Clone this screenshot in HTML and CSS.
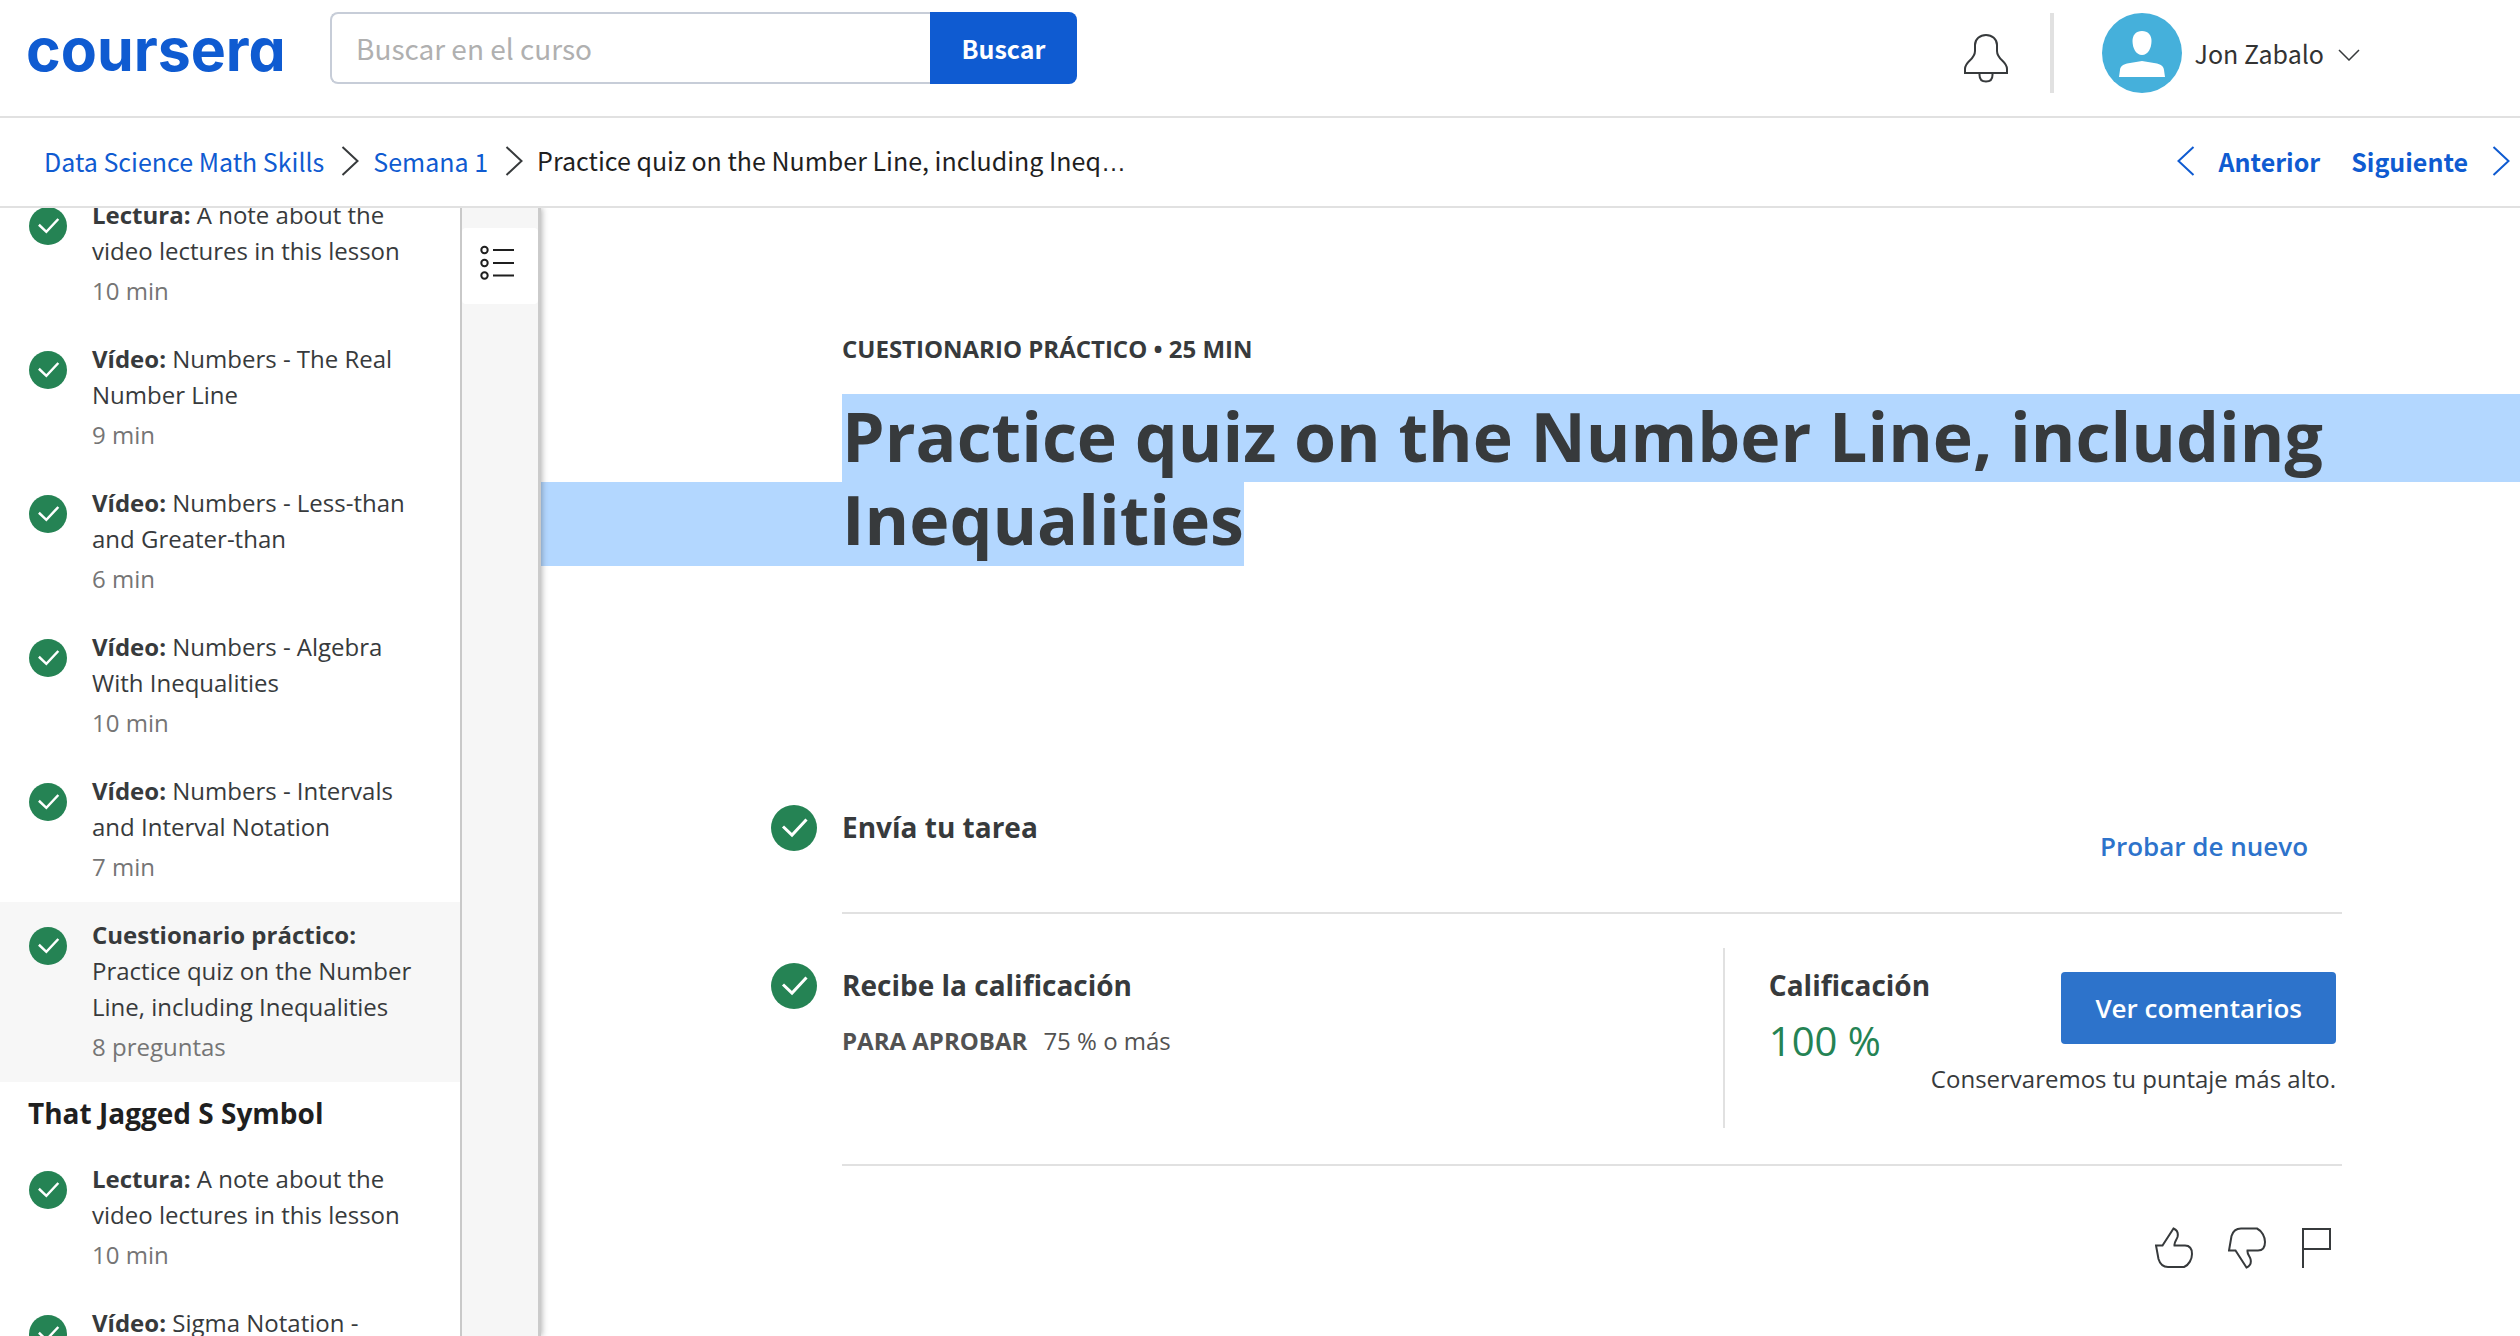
FILE: index.html
```html
<!DOCTYPE html>
<html lang="es">
<head>
<meta charset="utf-8">
<title>Practice quiz on the Number Line, including Inequalities | Coursera</title>
<meta name="viewport" content="width=device-width, initial-scale=1">
<link rel="stylesheet" href="styles.css">
</head>
<body>
<svg class="sprite" aria-hidden="true">
  <symbol id="check" viewBox="0 0 46 46">
    <circle cx="23" cy="23" r="23" fill="#258354"/>
    <path d="M12 21.500L21 30L35.500 14.500" fill="none" stroke="#fff" stroke-width="3"/>
  </symbol>
  <symbol id="right" viewBox="0 0 18 30">
    <path d="M1.500 1L16.500 15L1.500 29" fill="none" stroke="currentColor" stroke-width="2"/>
  </symbol>
  <symbol id="left" viewBox="0 0 18 30">
    <path d="M16.500 1L1.500 15L16.500 29" fill="none" stroke="currentColor" stroke-width="2"/>
  </symbol>
</svg>

<header class="header">
  <a class="logo" href="#">coursera</a>
  <form class="search">
    <input class="search-input" type="text" placeholder="Buscar en el curso" aria-label="Buscar en el curso">
    <button class="search-button" type="submit">Buscar</button>
  </form>
  <div class="account">
    <button class="bell" type="button" aria-label="Notificaciones">
      <svg width="46" height="50" viewBox="0 0 46 50" fill="none" stroke="#373a3c" stroke-width="2">
        <path d="M2 40V36C2 28 12 27 12 18V12C12 6 17 2 23 2S34 6 34 12V18C34 27 44 28 44 36V40Z"/>
        <path d="M16.500 40V42C16.500 46 19 48.500 23 48.500S29.500 46 29.500 42V40"/>
      </svg>
    </button>
    <button class="profile" type="button">
      <svg class="avatar" width="80" height="80" viewBox="0 0 80 80">
        <circle cx="40" cy="40" r="40" fill="#45b0db"/>
        <path d="M40 18C46 18 49.500 22 49.500 28C49.500 35 46 42 40 42S30.500 35 30.500 28C30.500 22 34 18 40 18Z" fill="#fff"/>
        <path d="M17 64L18 57C18.500 53 21 51.500 25 50.500L40 48L55 50.500C59 51.500 61.500 53 62 57L63 64Z" fill="#fff"/>
      </svg>
      <span>Jon Zabalo</span>
      <svg class="caret" width="22" height="12" viewBox="0 0 22 12" fill="none" stroke="#373a3c" stroke-width="1.500"><path d="M1 1L11 11L21 1"/></svg>
    </button>
  </div>
</header>

<nav class="course-nav">
  <div class="crumbs">
    <a href="#">Data Science Math Skills</a>
    <svg class="chevron"><use href="#right"/></svg>
    <a href="#">Semana 1</a>
    <svg class="chevron"><use href="#right"/></svg>
    <span class="current">Practice quiz on the Number Line, including Ineq<span class="more">…</span></span>
  </div>
  <div class="pager">
    <a class="pager-link" href="#"><svg class="chevron"><use href="#left"/></svg>Anterior</a>
    <a class="pager-link" href="#">Siguiente<svg class="chevron"><use href="#right"/></svg></a>
  </div>
</nav>

<div class="body">
  <aside class="sidebar">
    <div class="lessons">
      <a class="lesson" href="#"><svg class="lesson-check"><use href="#check"/></svg><span><span class="name"><b>Lectura:</b> A note about the video lectures in this lesson</span><span class="meta">10 min</span></span></a>
      <a class="lesson" href="#"><svg class="lesson-check"><use href="#check"/></svg><span><span class="name"><b>Vídeo:</b> Numbers - The Real Number Line</span><span class="meta">9 min</span></span></a>
      <a class="lesson" href="#"><svg class="lesson-check"><use href="#check"/></svg><span><span class="name"><b>Vídeo:</b> Numbers - Less-than and Greater-than</span><span class="meta">6 min</span></span></a>
      <a class="lesson" href="#"><svg class="lesson-check"><use href="#check"/></svg><span><span class="name"><b>Vídeo:</b> Numbers - Algebra With Inequalities</span><span class="meta">10 min</span></span></a>
      <a class="lesson" href="#"><svg class="lesson-check"><use href="#check"/></svg><span><span class="name"><b>Vídeo:</b> Numbers - Intervals and Interval Notation</span><span class="meta">7 min</span></span></a>
      <a class="lesson active" href="#"><svg class="lesson-check"><use href="#check"/></svg><span><span class="name"><b>Cuestionario práctico:</b> Practice quiz on the Number Line, including Inequalities</span><span class="meta">8 preguntas</span></span></a>
      <h2 class="lesson-group">That Jagged S Symbol</h2>
      <a class="lesson" href="#"><svg class="lesson-check"><use href="#check"/></svg><span><span class="name"><b>Lectura:</b> A note about the video lectures in this lesson</span><span class="meta">10 min</span></span></a>
      <a class="lesson" href="#"><svg class="lesson-check"><use href="#check"/></svg><span><span class="name"><b>Vídeo:</b> Sigma Notation - Introduction to Summation</span><span class="meta">6 min</span></span></a>
    </div>
  </aside>
  <div class="rail">
    <button class="rail-button" type="button" aria-label="Lista de lecciones">
      <svg width="34" height="36" viewBox="0 0 34 36" fill="none" stroke="#1f1f1f" stroke-width="2">
        <circle cx="4.500" cy="5" r="3.200"/><circle cx="4.500" cy="18" r="3.200"/><circle cx="4.500" cy="30.500" r="3.200"/>
        <path d="M13 5H34M13 18H34M13 30.500H34"/>
      </svg>
    </button>
  </div>
  <main class="main">
    <p class="eyebrow">CUESTIONARIO PRÁCTICO • 25 MIN</p>
    <h1 class="title"><span class="line-full">Practice quiz on the Number Line, including</span> <span class="line-end">Inequalities</span></h1>

    <section class="step step-submit">
      <svg class="step-check"><use href="#check"/></svg>
      <div class="step-content">
        <h2 class="step-title">Envía tu tarea</h2>
        <button class="retry" type="button">Probar de nuevo</button>
      </div>
    </section>
    <section class="step step-grade">
      <svg class="step-check"><use href="#check"/></svg>
      <div class="step-content">
        <div class="step-text">
          <h2 class="step-title">Recibe la calificación</h2>
          <p class="pass"><b>PARA APROBAR</b><span>75 % o más</span></p>
        </div>
        <div class="grade">
          <div class="grade-score">
            <h2 class="step-title">Calificación</h2>
            <p class="score">100 %</p>
          </div>
          <div class="grade-actions">
            <button class="feedback" type="button">Ver comentarios</button>
            <p class="note">Conservaremos tu puntaje más alto.</p>
          </div>
        </div>
      </div>
    </section>

    <div class="reactions">
      <button type="button" aria-label="Me gusta"><svg width="38" height="42" viewBox="0 0 38 42"><path d="M1 18.500H7.500L18.500 1.500C22 3 23.500 6 22.500 10C21.500 13 19 15 19.500 18.500H30C35 18.500 37 22 37 27C37 32 34 38 29 40H13C8 40 5 37 3.500 32Z"/></svg></button>
      <button type="button" aria-label="No me gusta"><svg width="38" height="42" viewBox="0 0 38 42"><path d="M1 23.500H7.500L18.500 40.500C22 39 23.500 36 22.500 32C21.500 29 19 27 19.500 23.500H30C35 23.500 37 20 37 15C37 10 34 4 29 1.500H13C8 1.500 5 4 3.500 9Z"/></svg></button>
      <button type="button" aria-label="Reportar"><svg width="30" height="42" viewBox="0 0 30 42"><path d="M2 41V2H29V22H2"/></svg></button>
    </div>
  </main>
</div>
</body>
</html>
```
FILE: styles.css
```css
* { box-sizing: border-box; }

html, body { height: 100%; }

body {
  margin: 0;
  display: flex;
  flex-direction: column;
  overflow: hidden;
  background: #fff;
  color: #373a3c;
  font-family: "Open Sans", sans-serif;
  font-size: 24px;
  line-height: 36px;
}

h1, h2, p { margin: 0; }
a { color: inherit; text-decoration: none; }
button { padding: 0; border: 0; background: none; color: inherit; font: inherit; cursor: pointer; }
svg { display: block; flex: none; }
.sprite { position: absolute; width: 0; height: 0; }

.header, .course-nav {
  flex: none;
  display: flex;
  border-bottom: 2px solid #e1e1e1;
  font-family: "Noto Sans CJK SC", sans-serif;
}

.header {
  height: 118px;
  padding: 12px 160px 0 26px;
  align-items: flex-start;
}

.logo {
  width: 304px;
  color: #0f5bd1;
  font: 700 59px/76px Inter, sans-serif;
  font-feature-settings: "cv11";
}

.search { display: flex; width: 747px; height: 72px; }

.search-input {
  flex: 1;
  min-width: 0;
  padding: 0 24px;
  border: 2px solid #c7cdd8;
  border-right-width: 0;
  border-radius: 8px 0 0 8px;
  font-family: inherit;
  font-size: 28px;
  color: #1f1f1f;
}
.search-input::placeholder { color: #b0b0b0; }

.search-button {
  width: 147px;
  border-radius: 0 8px 8px 0;
  background: #0f5bd1;
  color: #fff;
  font-size: 25px;
  font-weight: 700;
}

.account { display: flex; align-items: center; height: 82px; margin-left: auto; }
.bell { padding-top: 10px; margin-right: 41px; }
.profile {
  display: flex;
  align-items: center;
  padding-left: 48px;
  border-left: 4px solid #e1e1e1;
  font-size: 25px;
  color: #333;
}
.avatar { margin-right: 13px; }
.caret { margin: 4px 0 0 14px; }

.course-nav {
  height: 90px;
  padding: 0 10px 2px 44px;
  align-items: center;
  justify-content: space-between;
  font-size: 25px;
  color: #0f5bd1;
}
.crumbs, .pager, .pager-link { display: flex; align-items: center; }
.chevron { width: 18px; height: 30px; }
.crumbs { gap: 14px; }
.crumbs .chevron { margin-left: 3px; color: #373a3c; }
.current { white-space: nowrap; color: #1f1f1f; }
.more { font-family: "Liberation Sans", sans-serif; }
.pager { gap: 31px; font-weight: 700; }
.pager-link { gap: 24px; }

.body { flex: 1; min-height: 0; display: flex; }

.sidebar { flex: none; width: 460px; overflow: hidden; }
.lessons { margin-top: -26px; }

.lesson { display: flex; gap: 25px; padding: 15px 24px 17px 29px; }
.lesson.active { background: #f7f7f7; }
.lesson-check { width: 38px; height: 38px; margin-top: 10px; }
.name, .meta { display: block; }
.meta { margin-top: 4px; color: #757575; }

.lesson-group {
  padding: 12px 28px 14px;
  color: #1f1f1f;
  font-size: 28px;
  line-height: 38px;
}

.rail {
  position: relative;
  z-index: 1;
  flex: none;
  width: 78px;
  padding-top: 20px;
  border-left: 2px solid #c9c9c9;
  background: #f6f6f6;
  box-shadow: 3px 0 0 #cbcbcb, 4px 0 6px rgba(0, 0, 0, 0.3);
  clip-path: inset(0 -16px 0 0);
}
.rail-button { display: block; width: 76px; height: 76px; padding: 0 0 6px 18px; border-radius: 4px; background: #fff; }

.main { flex: 1; min-width: 0; padding: 123px 178px 0 233px; overflow: hidden; }

.eyebrow { margin-left: 71px; font-weight: 700; }

.title { margin: 27px 0 239px 71px; font-size: 68px; line-height: 84px; }
.line-full, .line-end { display: block; background: #b3d7ff; }
.line-full { margin-right: -178px; padding-bottom: 4px; }
.line-end { width: fit-content; margin-left: -304px; padding: 0 0 10px 304px; line-height: 74px; }

.step { display: flex; gap: 25px; }
.step-check { width: 46px; height: 46px; }
.step-content { flex: 1; display: flex; justify-content: space-between; border-bottom: 2px solid #e1e1e1; }
.step-title { font-size: 28px; line-height: 44px; }

.step-submit .step-content { height: 109px; }
.step-grade .step-check { margin-top: 49px; }
.step-grade .step-content { padding: 34px 6px 36px 0; }

.retry { align-self: flex-start; margin: 23px 34px 0 0; color: #2d73cb; font-size: 26px; font-weight: 600; }

.step-text { padding-top: 15px; }
.pass { display: flex; gap: 16px; margin-top: 16px; color: #525252; }

.grade { display: flex; height: 180px; border-left: 2px solid #e1e1e1; }
.grade-score { width: 162px; padding: 15px 0 0 44px; }
.score { margin-top: 6px; color: #258354; font-size: 40px; line-height: 56px; white-space: nowrap; }
.grade-actions { display: flex; flex-direction: column; align-items: flex-end; padding-top: 24px; margin-left: 44px; }
.feedback { height: 72px; padding: 0 34px; border-radius: 4px; background: #2d73cb; color: #fff; font-size: 26px; font-weight: 600; }
.note { margin-top: 17px; white-space: nowrap; }

.reactions { display: flex; justify-content: flex-end; gap: 35px; margin-top: 61px; padding-right: 11px; }
.reactions path { fill: none; stroke: #373a3c; stroke-width: 2; }
```
